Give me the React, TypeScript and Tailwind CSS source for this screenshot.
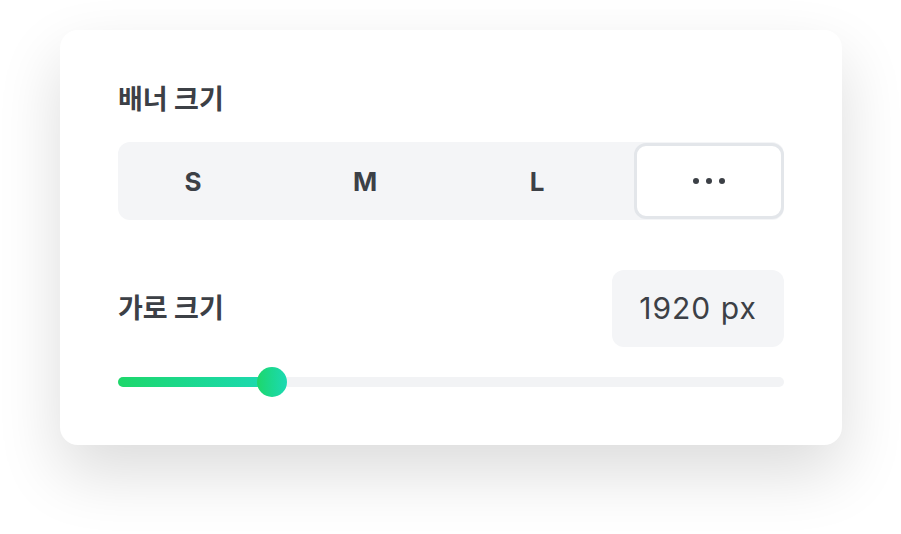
import React from "react";

export default function App() {
  const font = { fontFamily: 'Inter, "Noto Sans CJK KR", sans-serif' };
  return (
    <div className="w-[901px] h-[534px] bg-white relative overflow-hidden" style={font}>
      <div className="absolute left-[60px] top-[30px] w-[782px] h-[415px] bg-white rounded-[18px] shadow-[0_28px_64px_rgba(0,0,0,0.14)] px-[58px] pt-[54px] flex flex-col">
        <div className="h-[32px] leading-[32px] text-[27px] font-bold text-[#3c4046]">배너 크기</div>
        <div className="mt-[26px] h-[78px] bg-[#f4f5f7] rounded-[12px] flex items-center justify-between">
          {["S", "M", "L"].map((s) => (
            <div key={s} className="w-[150px] h-full flex items-center justify-center text-[26px] font-bold text-[#3c4046]">
              {s}
            </div>
          ))}
          <div className="w-[150px] h-[76px] bg-white border-[3px] border-[#e3e6ea] rounded-[12px] flex items-center justify-center gap-[7px]">
            <span className="w-[6px] h-[6px] rounded-full bg-[#3c4046]" />
            <span className="w-[6px] h-[6px] rounded-full bg-[#3c4046]" />
            <span className="w-[6px] h-[6px] rounded-full bg-[#3c4046]" />
          </div>
        </div>
        <div className="mt-[50px] flex items-center justify-between">
          <div className="text-[27px] leading-[32px] font-bold text-[#3c4046]">가로 크기</div>
          <div className="w-[172px] h-[77px] bg-[#f4f5f7] rounded-[12px] flex items-center justify-center text-[30px] tracking-[1px] text-[#3c4046]">
            1920 px
          </div>
        </div>
        <div className="mt-[20px] relative h-[30px] flex items-center">
          <div className="w-full h-[10px] rounded-full bg-[#f2f3f5]" />
          <div className="absolute left-0 top-[10px] h-[10px] w-[154px] rounded-full bg-gradient-to-r from-[#1ed76a] to-[#1dd9b3]" />
          <div className="absolute left-[139px] top-0 w-[30px] h-[30px] rounded-full bg-gradient-to-r from-[#1ed76a] to-[#1dd9b3]" />
        </div>
      </div>
    </div>
  );
}
